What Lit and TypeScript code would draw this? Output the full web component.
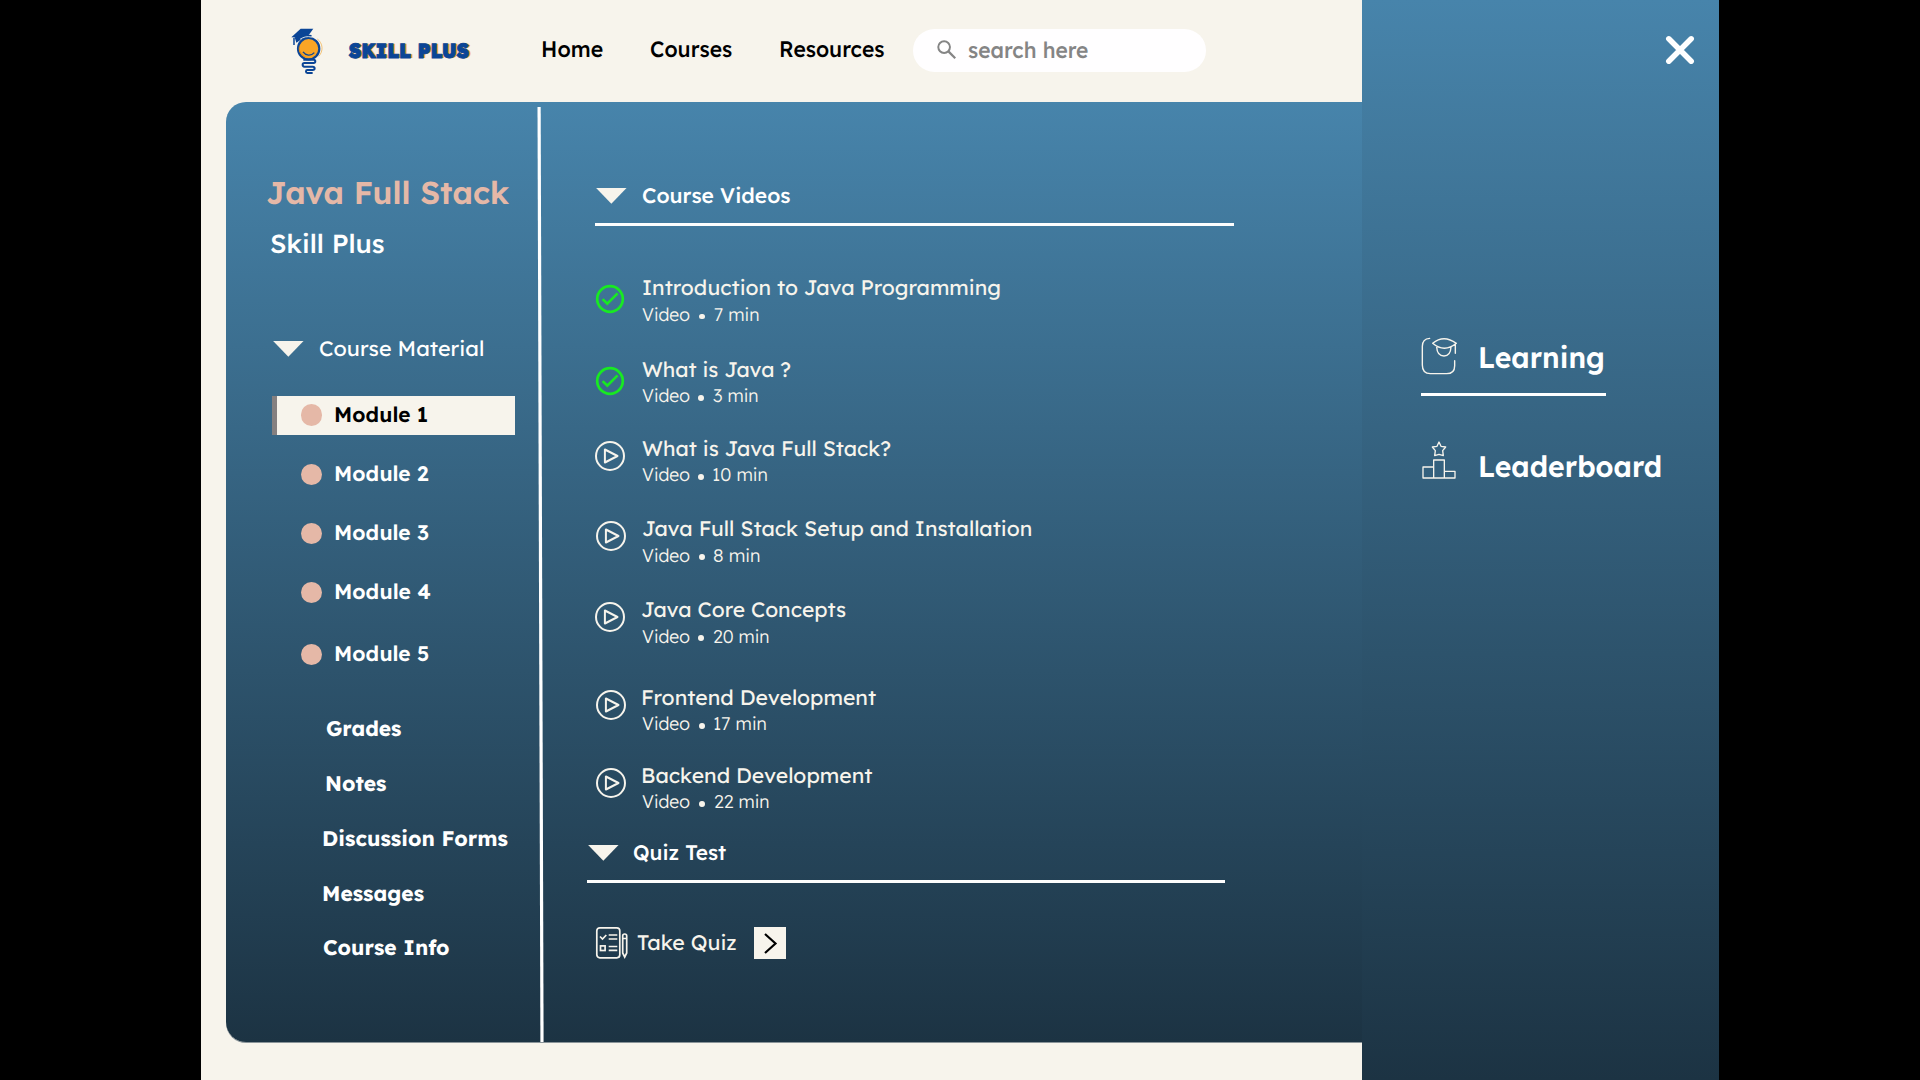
import { LitElement, html, css, svg } from "lit";
import { customElement, property, state } from "lit/decorators.js";
import { classMap } from "lit/directives/class-map.js";

/** One line of text, stretched so that its ink is exactly `w` pixels wide. */
@customElement("fit-text")
class FitText extends LitElement {
  @property() text = "";
  @property({ type: Number }) w = 0;
  @state() private scale = 1;
  @state() private shift = 0;

  static styles = css`
    :host {
      display: block;
      flex: none;
      white-space: pre;
    }
    .ink {
      display: inline-block;
      transform-origin: 0 50%;
    }
  `;

  firstUpdated() {
    const span = this.renderRoot.querySelector(".ink") as HTMLElement;
    const cs = getComputedStyle(span);
    const ctx = document.createElement("canvas").getContext("2d")!;
    ctx.font = `${cs.fontWeight} ${cs.fontSize} ${cs.fontFamily}`;
    const m = ctx.measureText(this.text);
    const bearings = m.width - (m.actualBoundingBoxRight + m.actualBoundingBoxLeft);
    const ink = span.getBoundingClientRect().width - bearings;
    this.scale = this.w / ink;
    this.shift = m.actualBoundingBoxLeft * this.scale;
  }

  render() {
    return html`<span
      class="ink"
      style="transform: translate(${this.shift}px, var(--dy, 0.02em)) rotate(0.0008deg) scaleX(${this.scale})"
      >${this.text}</span
    >`;
  }
}

const t = (text: string, w: number, cls = "") =>
  html`<fit-text class=${cls} .text=${text} .w=${w} style="width:${w}px"></fit-text>`;

const logo = html`<svg class="logo" viewBox="30 20 100 145" fill="none">
  <path d="M112 56a34 34 0 0 1 4 52" stroke="#f2b860" stroke-width="2.500" />
  <circle cx="86" cy="85" r="32" fill="#f9a526" stroke="#0b4596" stroke-width="6.500" />
  <path d="M58 74a28 28 0 0 0 26 38 34 34 0 0 1-26-38z" fill="#e98b12" />
  <path d="M69 95c8 11 24 13 34 2" stroke="#0b4596" stroke-width="4" />
  <path d="M34 51 62 25h38L87 43 62 52z" fill="#0b4596" />
  <path d="M44 51 86 43 95 44 94 51 66 56 49 67z" fill="#0b4596" />
  <path d="M60 57c10-7 22-10 35-7" stroke="#f7f4ec" stroke-width="2.500" />
  <path d="M42 53v21" stroke="#0b4596" stroke-width="4.500" />
  <path
    d="M70 118h31q5 0 5 5t-5 5H73q-5 0-5 5.500t5 5.500h25q6 0 6 5t-6 5H82q-4 0-4 4.500t4 4.500h16"
    stroke="#0b4596"
    stroke-width="6"
  />
</svg>`;

const searchIcon = html`<svg class="search-icon" viewBox="0 0 20 20" fill="none" stroke="#858585">
  <circle cx="7.300" cy="7.300" r="6" stroke-width="2" />
  <path d="M11.700 11.700 18.700 18.700" stroke-width="2.300" />
</svg>`;

const triangle = html`<svg class="tri" viewBox="0 0 31 16"><path d="M0 0H31L15.500 16z" fill="#f7f4ec" /></svg>`;

const check = svg`<circle cx="15" cy="15" r="12.800" stroke="#18e922" stroke-width="2.700"/>
  <path d="M7.600 15.100 12.300 19.700 22.600 9.400" stroke="#18e922" stroke-width="2.700"/>`;
const play = svg`<circle cx="15" cy="15" r="14" stroke="#f7f4ec" stroke-width="2"/>
  <path d="M9.900 8.500V21.500L22.500 15z" stroke="#f7f4ec" stroke-width="2" stroke-linejoin="round"/>`;

const quizIcon = html`<svg class="quiz-icon" viewBox="0 0 32 32" fill="none" stroke="#f7f4ec" stroke-width="1.700">
  <rect x=".8" y=".8" width="23" height="30" rx="3" />
  <path d="M4 9.500 6.500 12 10.300 8M12.700 8h8.600M12.700 12h8.600M12.700 19.500h8.600M12.700 23.300h8.600" />
  <rect x="4.500" y="18.900" width="4.600" height="4.600" />
  <path d="M26.700 9q0-2 2-2t2 2V26l-2 4-2-4zM26.700 11.500h4" />
</svg>`;

const learningIcon = html`<svg class="menu-icon" viewBox="0 0 108 114" fill="none" stroke="#f7f4ec" stroke-width="4.200" stroke-linecap="round" stroke-linejoin="round">
  <path d="M26 4C10 5 4 14 4 28V84C4 102 11 110 28 110H77C94 110 101 102 101 86V71" />
  <path d="M35 19Q68-9 106 19Q70 49 35 19zM47 30C48 48 54 57 69 57S89 48 90 30M103 22V49" />
</svg>`;

const boardIcon = html`<svg class="menu-icon" viewBox="0 0 108 114" fill="none" stroke="#f7f4ec" stroke-width="4" stroke-linejoin="round">
  <path d="M54 3 60 16 74 18 65 29 67 44 54 40 41 44 43 29 34 18 48 16z" />
  <path d="M38 57H70V111H38zM38 78H6V111H102V91H70" />
</svg>`;

interface Video {
  title: string;
  w: number;
  time: string;
  tw: number;
  done?: boolean;
  inset?: boolean;
}

const videos: Video[] = [
  { title: "Introduction to Java Programming", w: 357.3, time: "7 min", tw: 45, done: true, inset: true },
  { title: "What is Java ?", w: 148.3, time: "3 min", tw: 45, done: true },
  { title: "What is Java Full Stack?", w: 248.3, time: "10 min", tw: 54.3 },
  { title: "Java Full Stack Setup and Installation", w: 388.7, time: "8 min", tw: 46, inset: true },
  { title: "Java Core Concepts", w: 204, time: "20 min", tw: 56 },
  { title: "Frontend Development", w: 233, time: "17 min", tw: 52.3, inset: true },
  { title: "Backend Development", w: 229.3, time: "22 min", tw: 55, inset: true },
];

const modules: [string, number][] = [
  ["Module 1", 92.7],
  ["Module 2", 94],
  ["Module 3", 94],
  ["Module 4", 95.3],
  ["Module 5", 94],
];

const links: [string, number, boolean][] = [
  ["Grades", 75, true],
  ["Notes", 60, true],
  ["Discussion Forms", 184.6, false],
  ["Messages", 100.6, false],
  ["Course Info", 126, false],
];

@customElement("app-root")
class AppRoot extends LitElement {
  @state() private active = 0;

  static styles = css`
    :host {
      display: block;
      width: 1920px;
      height: 1080px;
      overflow: hidden;
      background: #000;
      font-family: "Lexend", "Inter", "Open Sans", sans-serif;
      font-feature-settings: "cv11" 1, "cv08" 1;
      text-rendering: geometricPrecision;
      color: #fff;
    }
    svg {
      display: block;
      flex: none;
      overflow: visible;
    }
    .page {
      display: grid;
      grid-template-columns: 1161px 357px;
      width: 1518px;
      height: 1080px;
      margin-left: 201px;
      background: #f7f4ec;
    }
    .header {
      --dy: -0.025em;
      display: flex;
      align-items: flex-start;
      box-sizing: border-box;
      height: 102px;
      padding: 26.700px 0 0 89px;
      color: #000;
    }
    .logo {
      width: 33.300px;
      height: 48.300px;
    }
    .brand {
      --dy: 0.01em;
      margin: 10.300px 0 0 25.200px;
      font-size: 20.500px;
      line-height: 28px;
      font-weight: 900;
      color: #0b4596;
      -webkit-text-stroke: 0.900px #0b4596;
      text-shadow: 2.200px 0 0 #f2a840;
    }
    .nav {
      display: flex;
      margin: 8.900px 0 0 73.300px;
      font-size: 22.400px;
      line-height: 28px;
      font-weight: 500;
    }
    .nav .n1 {
      margin-left: 48.200px;
    }
    .nav .n2 {
      margin-left: 49px;
    }
    .search {
      display: flex;
      box-sizing: border-box;
      width: 293px;
      height: 43px;
      margin: 2.300px 0 0 28.600px;
      padding: 7.600px 0 0 24px;
      border-radius: 22px;
      background: #fffeff;
      color: #858585;
      font-size: 22.400px;
      line-height: 28px;
      font-weight: 500;
    }
    .search-icon {
      width: 19.500px;
      height: 19.500px;
      margin: 3.700px 11px 0 0;
    }
    .panel {
      display: grid;
      grid-template-columns: 310px 8px 1fr;
      height: 940px;
      margin-left: 25px;
      border-radius: 20px 0 0 20px;
      background: linear-gradient(180deg, #4784ab, #1c3343);
      box-shadow: 0 1px 0 #8a9499;
    }
    .side {
      padding: 70.700px 0 0 40.800px;
      font-size: 21px;
      line-height: 26px;
    }
    .title {
      --dy: -0.025em;
      font-size: 31.500px;
      line-height: 40px;
      font-weight: 600;
      color: #e5b8a7;
    }
    .sub {
      --dy: -0.005em;
      margin: 15px 0 0 3.900px;
      font-size: 26px;
      line-height: 32px;
      font-weight: 500;
    }
    .tri {
      width: 30.700px;
      height: 15.700px;
      margin-top: 5.400px;
    }
    .material {
      display: flex;
      gap: 15.700px;
      margin: 75.900px 0 0 6.500px;
      font-weight: 450;
    }
    .modules {
      display: grid;
      grid-template-rows: 59.300px 59px 59px 62.400px 39.300px;
      margin: 34.400px 0 0 5.200px;
      font-weight: 600;
    }
    .module {
      display: flex;
      box-sizing: border-box;
      width: 243.500px;
      height: 39.300px;
      padding-top: 5.600px;
      border-left: 5px solid transparent;
    }
    .module.active {
      border-left-color: #858080;
      background: #f7f4ec;
      background-clip: padding-box;
      color: #000;
    }
    .dot {
      width: 21.400px;
      height: 21.400px;
      margin: 2.700px 12.600px 0 23.800px;
      border-radius: 50%;
      background: #e5b8a7;
    }
    .links {
      display: grid;
      grid-auto-rows: 54.750px;
      margin: 41.300px 0 0 56.300px;
      font-size: 21.100px;
      font-weight: 700;
    }
    .links .in {
      margin-left: 2.700px;
    }
    .divider {
      width: 8px;
      height: 940px;
    }
    .main {
      padding: 80.600px 0 0 51px;
      font-size: 21px;
      line-height: 26px;
    }
    .head {
      display: flex;
      gap: 15.500px;
      box-sizing: border-box;
      width: 638.500px;
      height: 43.500px;
      padding-left: 1px;
      border-bottom: 3px solid #fdfdfd;
      font-weight: 500;
    }
    .head.quiz {
      gap: 15px;
      margin-left: -8.300px;
    }
    .videos {
      display: grid;
      grid-template-rows: 81.300px 79.300px 80.300px 81px 87.700px 78px 77px;
      margin-top: 49.200px;
      color: #f7f4ec;
      font-weight: 400;
    }
    .video {
      display: flex;
      gap: 16.500px;
    }
    .video.in {
      padding-left: 0.900px;
    }
    .video.in .name {
      margin-left: 0.500px;
    }
    .state {
      width: 30px;
      height: 30px;
      margin-top: 5.300px;
    }
    .state.done {
      margin: 9.200px 0.500px 0 -0.500px;
    }
    .meta {
      --dy: -0.015em;
      display: flex;
      align-items: center;
      margin-top: 1.400px;
      font-size: 18.400px;
      line-height: 24px;
      font-weight: 300;
    }
    .bullet {
      width: 5.800px;
      height: 5.800px;
      margin: 3.500px 9px 0 9.300px;
      border-radius: 50%;
      background: #f7f4ec;
    }
    .take {
      display: flex;
      margin: 43.400px 0 0 1.300px;
      color: #f7f4ec;
      font-weight: 450;
    }
    .quiz-icon {
      width: 32px;
      height: 32px;
    }
    .take-label {
      margin: 3.700px 18px 0 8.500px;
    }
    .go {
      width: 32px;
      height: 32px;
      background: #f7f4ec;
    }
    .drawer {
      box-sizing: border-box;
      height: 1080px;
      padding: 36px 0 0 59px;
      background: linear-gradient(180deg, #4784ab, #1c3343);
      font-size: 29.500px;
      line-height: 36px;
      font-weight: 600;
    }
    .close {
      width: 28px;
      height: 28px;
      margin-left: 244.500px;
    }
    .item {
      display: flex;
      gap: 23.200px;
    }
    .item.first {
      box-sizing: border-box;
      width: 185px;
      height: 59px;
      margin-top: 273px;
      border-bottom: 3px solid #fff;
    }
    .item.second {
      margin-top: 45px;
      padding-left: 0.300px;
    }
    .item .l1 {
      margin-top: 1.600px;
    }
    .item .l2 {
      margin-top: 7.100px;
    }
    .menu-icon {
      width: 36px;
      height: 38px;
    }
  `;

  private row(v: Video) {
    return html`<div class=${classMap({ video: true, in: !!v.inset })}>
      <svg class=${classMap({ state: true, done: !!v.done })} viewBox="0 0 30 30" fill="none">
        ${v.done ? check : play}
      </svg>
      <div>
        ${t(v.title, v.w, "name")}
        <div class="meta">${t("Video", 47.7)}<i class="bullet"></i>${t(v.time, v.tw)}</div>
      </div>
    </div>`;
  }

  render() {
    return html`<div class="page">
      <div>
        <header class="header">
          ${logo}${t("SKILL PLUS", 120.8, "brand")}
          <nav class="nav">${t("Home", 60)}${t("Courses", 81.4, "n1")}${t("Resources", 103.6, "n2")}</nav>
          <div class="search">${searchIcon}${t("search here", 120.3)}</div>
        </header>
        <section class="panel">
          <aside class="side">
            ${t("Java Full Stack", 242, "title")}${t("Skill Plus", 113, "sub")}
            <div class="material">${triangle}${t("Course Material", 163)}</div>
            <div class="modules">
              ${modules.map(
                ([name, w], i) => html`<div
                  class=${classMap({ module: true, active: i === this.active })}
                  @click=${() => (this.active = i)}
                >
                  <i class="dot"></i>${t(name, w)}
                </div>`
              )}
            </div>
            <div class="links">${links.map(([name, w, inset]) => t(name, w, inset ? "in" : ""))}</div>
          </aside>
          <svg class="divider" viewBox="0 0 8 940">
            <path d="M3.100 5 6 940" stroke="#fff" stroke-width="3.200" />
          </svg>
          <main class="main">
            <div class="head">${triangle}${t("Course Videos", 148.3)}</div>
            <div class="videos">${videos.map((v) => this.row(v))}</div>
            <div class="head quiz">${triangle}${t("Quiz Test", 93)}</div>
            <div class="take">
              ${quizIcon}${t("Take Quiz", 99.5, "take-label")}
              <svg class="go" viewBox="0 0 32 32" fill="none" stroke="#000" stroke-width="2.200">
                <path d="M11 7 21.500 16.500 11 26" />
              </svg>
            </div>
          </main>
        </section>
      </div>
      <aside class="drawer">
        <svg class="close" viewBox="0 0 28 28" stroke="#fff" stroke-width="5.500" stroke-linecap="round">
          <path d="M2.800 2.800 25.200 25.200M25.200 2.800 2.800 25.200" />
        </svg>
        <div class="item first">${learningIcon}${t("Learning", 123.3, "l1")}</div>
        <div class="item second">${boardIcon}${t("Leaderboard", 181, "l2")}</div>
      </aside>
    </div>`;
  }
}
